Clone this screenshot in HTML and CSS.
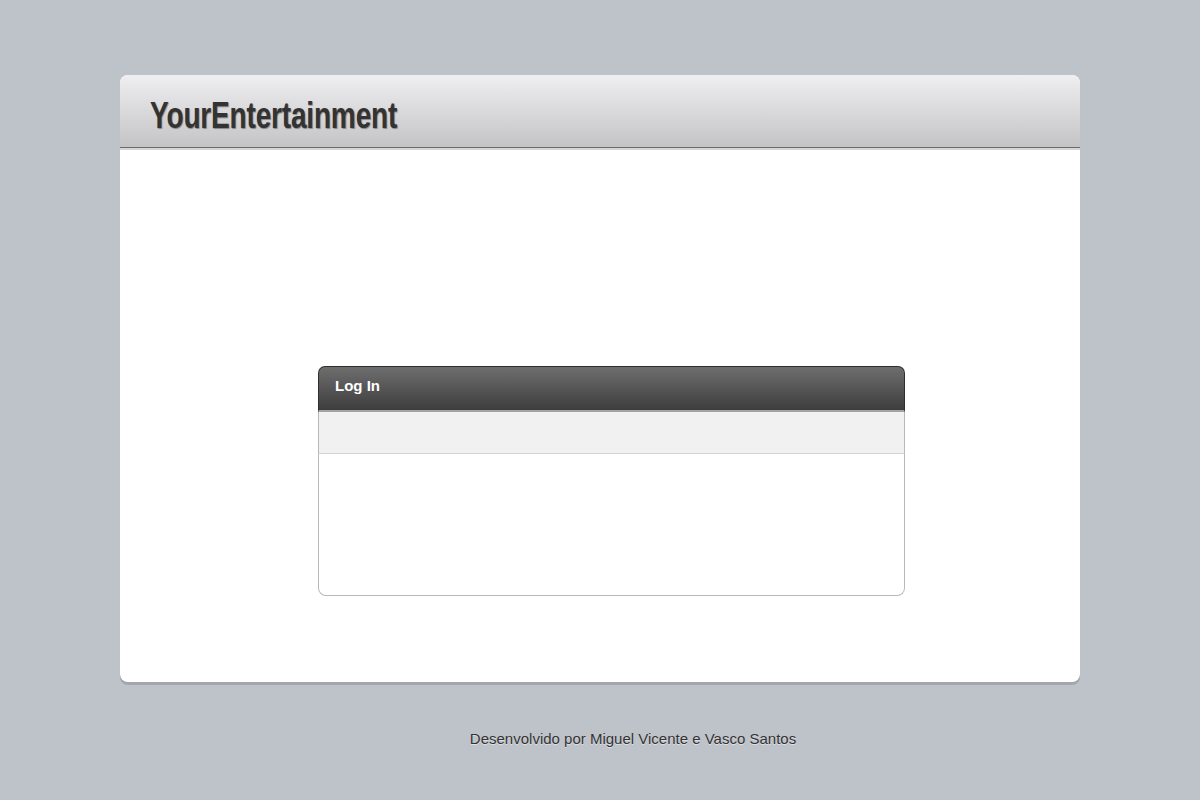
FILE: index.html
```html
<!DOCTYPE html>
<html>
<head>
<meta charset="utf-8">
<link rel="stylesheet" href="styles.css">
</head>
<body>
<div class="page">
  <div class="card">
    <div class="header"><h1 class="brand">YourEntertainment</h1></div>
    <div class="content">
      <div class="login">
        <div class="login-head">Log In</div>
        <div class="login-bar"></div>
        <div class="login-body"></div>
      </div>
    </div>
  </div>
  <div class="footer">Desenvolvido por Miguel Vicente e Vasco Santos</div>
</div>
</body>
</html>
```
FILE: styles.css
```css
html, body { margin: 0; padding: 0; }
body {
  background: #bec2c9;
  font-family: "Liberation Sans", Arial, sans-serif;
  width: 1200px;
  height: 800px;
  overflow: hidden;
}
.page { padding-top: 75px; }
.card {
  width: 960px;
  margin: 0 auto;
  background: #fff;
  border-radius: 8px;
  box-shadow: 0 3px 0 #a3a6ab;
  overflow: hidden;
}
.header {
  height: 72px;
  background: linear-gradient(#efeff1, #c4c4c6);
  border-bottom: 1px solid #6b6b6b;
  box-shadow: 0 2px 0 #d6d6d6;
  position: relative;
  display: flex;
  align-items: center;
  padding-left: 30px;
}
.brand {
  margin: 0;
  font-family: "Liberation Sans", Arial, sans-serif;
  font-weight: bold;
  font-size: 37px;
  color: #333;
  letter-spacing: -0.3px;
  text-shadow: 1px 1px 1px rgba(0,0,0,0.35);
  margin-top: 10px;
  transform: scaleX(0.76);
  transform-origin: 0 50%;
  white-space: nowrap;
}
.content {
  height: 534px;
  padding-top: 218px;
  box-sizing: border-box;
}
.login {
  width: 587px;
  margin-left: 198px;
  box-sizing: border-box;
}
.login-head {
  box-sizing: border-box;
  background: linear-gradient(#6f6e6f, #3d3d3d);
  border: 1px solid #2e2e2e;
  border-radius: 7px 7px 0 0;
  color: #fff;
  font-weight: bold;
  font-size: 15px;
  padding-left: 16px;
  line-height: 38px;
  border-bottom: 2px solid #a3a3a3;
  height: 46px;
}
.login-bar {
  height: 41px;
  background: #f1f1f1;
  border-left: 1px solid #b5b9be;
  border-right: 1px solid #b5b9be;
  border-bottom: 1px solid #d3d3d3;
}
.login-body {
  height: 141px;
  background: #fff;
  border: 1px solid #b5b9be;
  border-top: none;
  border-radius: 0 0 8px 8px;
}
.footer {
  margin-top: 48px;
  padding-left: 66px;
  text-align: center;
  font-size: 15px;
  color: #333;
  text-shadow: 0 1px 0 rgba(255,255,255,0.5);
}
```
